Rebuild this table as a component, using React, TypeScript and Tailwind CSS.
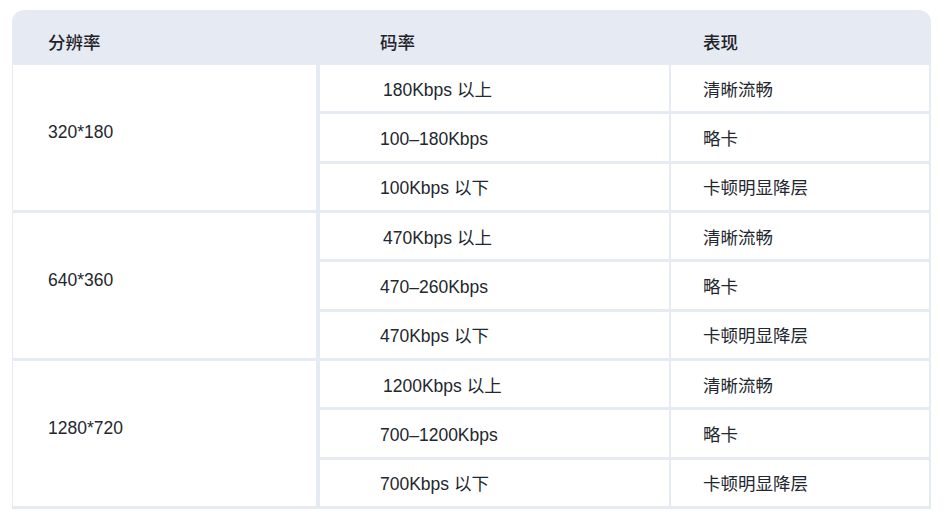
import React from 'react';

interface Rate {
  rate: string;
  result: string;
  indent?: boolean;
}

interface Group {
  resolution: string;
  rates: Rate[];
}

const groups: Group[] = [
  {
    resolution: '320*180',
    rates: [
      { rate: '180Kbps 以上', result: '清晰流畅', indent: true },
      { rate: '100–180Kbps', result: '略卡' },
      { rate: '100Kbps 以下', result: '卡顿明显降层' },
    ],
  },
  {
    resolution: '640*360',
    rates: [
      { rate: '470Kbps 以上', result: '清晰流畅', indent: true },
      { rate: '470–260Kbps', result: '略卡' },
      { rate: '470Kbps 以下', result: '卡顿明显降层' },
    ],
  },
  {
    resolution: '1280*720',
    rates: [
      { rate: '1200Kbps 以上', result: '清晰流畅', indent: true },
      { rate: '700–1200Kbps', result: '略卡' },
      { rate: '700Kbps 以下', result: '卡顿明显降层' },
    ],
  },
];

export default function App() {
  return (
    <div
      className="min-h-[523px] bg-white pt-[10px] pl-[12px] text-[17.5px] text-[#23272e]"
      style={{ fontFamily: '"Liberation Sans", "Noto Sans CJK SC", sans-serif' }}
    >
      <div className="w-[919px] rounded-t-[12px] overflow-hidden bg-[#e5eaf3]">
        {/* header */}
        <div className="flex h-[55px] items-center pt-[12px] font-medium text-[#1f2329]">
          <div className="w-[308px] pl-[36px]">分辨率</div>
          <div className="w-[351px] pl-[60px]">码率</div>
          <div className="flex-1 pl-[32px]">表现</div>
        </div>

        {/* body */}
        <div className="flex flex-col gap-[3px] pl-px pr-[2px] pb-[3px]">
          {groups.map((group) => (
            <div key={group.resolution} className="flex h-[145px] gap-[4px]">
              <div className="w-[303px] flex-shrink-0 bg-white flex items-center pl-[35px] pb-[11px]">
                {group.resolution}
              </div>
              <div className="flex-1 flex flex-col gap-[3px]">
                {group.rates.map((r) => (
                  <div key={r.rate} className="flex-1 flex gap-[2px]">
                    <div
                      className={`w-[349px] bg-white flex items-center pt-[3px] ${
                        r.indent ? 'pl-[63px]' : 'pl-[60px]'
                      }`}
                    >
                      {r.rate}
                    </div>
                    <div className="flex-1 bg-white flex items-center pl-[32px] pt-[3px]">
                      {r.result}
                    </div>
                  </div>
                ))}
              </div>
            </div>
          ))}
        </div>
      </div>
    </div>
  );
}
